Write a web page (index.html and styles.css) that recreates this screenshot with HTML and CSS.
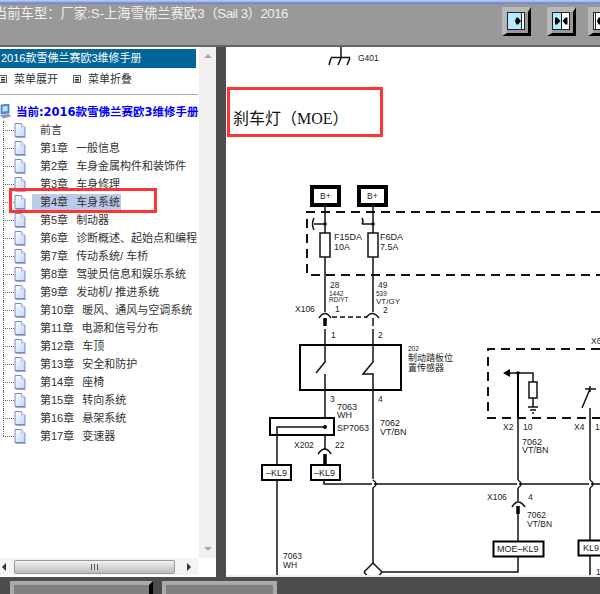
FILE: index.html
```html
<!DOCTYPE html>
<html lang="zh-CN">
<head>
    <meta charset="UTF-8">
    <title>2016款雪佛兰赛欧3维修手册</title>
    <link rel="stylesheet" href="styles.css">
</head>
<body>
    <svg class="defs" width="0" height="0">
        <defs>
            <linearGradient id="docFill" x1="0" y1="0" x2="1" y2="1">
                <stop offset="0" stop-color="#ffffff"/>
                <stop offset="1" stop-color="#bcd6f8"/>
            </linearGradient>
            <symbol id="doc" viewBox="0 0 12 15">
                <path d="M1 .5H7.5L11 4V13.5H1Z" fill="url(#docFill)" stroke="#7d87c0"/>
                <path d="M7.5 .5V4H11" fill="#fff" stroke="#a9b1d8"/>
                <path d="M1.5 14.5H12" stroke="#a8a8b8"/>
            </symbol>
            <symbol id="menuIcon" viewBox="0 0 8 8">
                <path d="M.5 .5H7.5V7.5H.5Z" fill="#fff" stroke="#555"/>
                <path d="M2 2.5H6M2 4.5H6M2 6H6" stroke="#222"/>
            </symbol>
        </defs>
    </svg>

    <div class="titlebar"></div>

    <div class="toolbar">
        <div class="car-info">当前车型：厂家:S-上海雪佛兰赛欧3<span class="car-tail">（Sail 3）2016</span></div>
        <div class="tools">
            <button class="tool-btn">
                <svg width="18" height="18" viewBox="0 0 18 18">
                    <rect x=".5" y=".5" width="17" height="17" fill="#b9e9ff" stroke="#222"/>
                    <rect x="15" y="1" width="2" height="16" fill="#fff"/>
                    <path d="M14.5 1V17" stroke="#222"/>
                    <path d="M8 9L9.5 5.5H11L14 9L11 12.5H9.5Z" fill="#000"/>
                </svg>
            </button>
            <button class="tool-btn btn-mid">
                <svg width="18" height="18" viewBox="0 0 18 18">
                    <rect x=".5" y=".5" width="17" height="17" fill="#fff" stroke="#222"/>
                    <rect x="1" y="1" width="8" height="16" fill="#b9e9ff"/>
                    <path d="M9.5 1V17" stroke="#222"/>
                    <path d="M3 5.5H5L8.5 9L5 12.5H3Z" fill="#000"/>
                    <path d="M15.5 5.5H13.5L10.5 9L13.5 12.5H15.5Z" fill="#000"/>
                </svg>
            </button>
            <button class="tool-btn btn-last">
                <svg width="18" height="18" viewBox="0 0 18 18">
                    <rect x=".5" y=".5" width="17" height="17" fill="#fff" stroke="#222"/>
                    <path d="M2.5 1V17" stroke="#222"/>
                    <path d="M10 9L7 5.5H5.5L4 9L5.5 12.5H7Z" fill="#000"/>
                </svg>
            </button>
        </div>
    </div>

    <div class="main">
        <div class="side">
            <div class="side-top">
                <div class="tree-pane">
                    <div class="manual-title">2016款雪佛兰赛欧3维修手册</div>
                    <div class="menu-row">
                        <span class="menu-link"><svg class="menu-icon"><use href="#menuIcon"/></svg>菜单展开</span>
                        <span class="menu-link"><svg class="menu-icon"><use href="#menuIcon"/></svg>菜单折叠</span>
                    </div>
                    <div class="current">
                        <svg class="root-icon" width="11" height="15" viewBox="0 0 11 15">
                            <path d="M1 1L9 0V9L1 10Z" fill="#4f8fe0" stroke="#3a5f9a" stroke-width=".6"/>
                            <path d="M2.5 2.5L7.5 2V7L2.5 7.5Z" fill="#bfe2ff"/>
                            <path d="M0 11L9 10L11 12.5L3 14.5Z" fill="#8a97ad"/>
                        </svg>
                        <span>当前:2016款雪佛兰赛欧3维修手册</span>
                    </div>
                    <ul class="tree">
                        <li><svg class="doc"><use href="#doc"/></svg><span class="label">前言</span></li>
                        <li><svg class="doc"><use href="#doc"/></svg><span class="label"><b>第1章</b>一般信息</span></li>
                        <li><svg class="doc"><use href="#doc"/></svg><span class="label"><b>第2章</b>车身金属构件和装饰件</span></li>
                        <li><svg class="doc"><use href="#doc"/></svg><span class="label"><b>第3章</b>车身修理</span></li>
                        <li class="active"><svg class="doc"><use href="#doc"/></svg><span class="label"><b>第4章</b>车身系统</span></li>
                        <li><svg class="doc"><use href="#doc"/></svg><span class="label"><b>第5章</b>制动器</span></li>
                        <li><svg class="doc"><use href="#doc"/></svg><span class="label"><b>第6章</b>诊断概述、起始点和编程</span></li>
                        <li><svg class="doc"><use href="#doc"/></svg><span class="label"><b>第7章</b>传动系统/ 车桥</span></li>
                        <li><svg class="doc"><use href="#doc"/></svg><span class="label"><b>第8章</b>驾驶员信息和娱乐系统</span></li>
                        <li><svg class="doc"><use href="#doc"/></svg><span class="label"><b>第9章</b>发动机/ 推进系统</span></li>
                        <li><svg class="doc"><use href="#doc"/></svg><span class="label"><b>第10章</b>暖风、通风与空调系统</span></li>
                        <li><svg class="doc"><use href="#doc"/></svg><span class="label"><b>第11章</b>电源和信号分布</span></li>
                        <li><svg class="doc"><use href="#doc"/></svg><span class="label"><b>第12章</b>车顶</span></li>
                        <li><svg class="doc"><use href="#doc"/></svg><span class="label"><b>第13章</b>安全和防护</span></li>
                        <li><svg class="doc"><use href="#doc"/></svg><span class="label"><b>第14章</b>座椅</span></li>
                        <li><svg class="doc"><use href="#doc"/></svg><span class="label"><b>第15章</b>转向系统</span></li>
                        <li><svg class="doc"><use href="#doc"/></svg><span class="label"><b>第16章</b>悬架系统</span></li>
                        <li><svg class="doc"><use href="#doc"/></svg><span class="label"><b>第17章</b>变速器</span></li>
                    </ul>
                </div>
                <div class="vscroll">
                    <span class="arrow-up"></span>
                    <span class="arrow-down"></span>
                </div>
            </div>
            <div class="hscroll">
                <span class="arrow-left"></span>
                <div class="thumb"><span class="grip"></span></div>
                <span class="arrow-right"></span>
            </div>
            <div class="mark-row"></div>
        </div>

        <div class="splitter"></div>

        <div class="content">
            <svg class="diagram" width="374" height="528" viewBox="226 47 374 528">
                <!-- 标题框 -->
                <rect class="mark" x="228.5" y="88.5" width="153" height="47"/>
                <text class="heading" x="233" y="124">刹车灯（MOE）</text>

                <!-- G401 -->
                <path class="w" d="M341 47V57.5M331 57.5H350M331 58L329 65M341 58L338 65M350 58L347 65"/>
                <text class="t8" x="358" y="61">G401</text>

                <!-- 电源 -->
                <rect class="fat" x="312" y="187" width="27" height="18"/>
                <rect class="fat" x="359" y="187" width="27" height="18"/>
                <text class="t8" x="320" y="199">B+</text>
                <text class="t8" x="367" y="199">B+</text>

                <path class="dash" d="M600 212H307V275H600"/>

                <path class="w" d="M325 205V312M373 205V312"/>
                <circle cx="325" cy="224" r="1.8"/>
                <circle cx="373" cy="224" r="1.8"/>
                <path class="w" d="M325 224H314M314 218Q311 224 314 230M373 224H362M362 218Q364 221 362 224"/>
                <rect class="fuse" x="320" y="233" width="10" height="24"/>
                <rect class="fuse" x="368" y="233" width="10" height="24"/>
                <text class="t9" x="334" y="240">F15DA</text>
                <text class="t9" x="334" y="250">10A</text>
                <text class="t9" x="380" y="240">F6DA</text>
                <text class="t9" x="380" y="250">7.5A</text>
                <text class="t8" x="330" y="288">28</text>
                <text class="t8" x="378" y="288">49</text>
                <text class="t6" x="329" y="296">1442</text>
                <text class="t6" x="329" y="302">RD/YT</text>
                <text class="t6" x="376" y="296">539</text>
                <text class="t7" x="376" y="304">VT/GY</text>
                <text class="t8" x="295" y="312">X106</text>
                <text class="t8" x="335" y="312">1</text>
                <text class="t8" x="383" y="313">2</text>

                <!-- X106 接头 -->
                <path class="w" d="M319 318Q325 309 331 318M366 318Q372 309 379 318"/>
                <path class="pin" d="M325 318V326"/>
                <path class="w" d="M373 318V326M325 329V345M373 329V345"/>
                <path class="thin-dash" d="M332 317H366"/>
                <text class="t8" x="331" y="338">1</text>
                <text class="t8" x="378" y="338">2</text>

                <!-- 开关 -->
                <rect class="box" x="300" y="345" width="101" height="45"/>
                <path class="w" d="M325 345V362L316 373M325 374V450M373 345V362L363 374H373V480"/>
                <text class="t6" x="408" y="351">202</text>
                <text class="cn" x="408" y="361">制动踏板位</text>
                <text class="cn" x="408" y="371">置传感器</text>
                <text class="t8" x="330" y="402">3</text>
                <text class="t8" x="378" y="402">4</text>
                <text class="t9" x="337" y="410">7063</text>
                <text class="t9" x="337" y="418">WH</text>
                <text class="t9" x="380" y="426">7062</text>
                <text class="t9" x="380" y="435">VT/BN</text>

                <!-- SP7063 -->
                <rect class="box" x="270" y="418" width="64" height="17"/>
                <circle cx="325" cy="427" r="2"/>
                <path class="w" d="M325 427H277V575"/>
                <text class="t9" x="337" y="431">SP7063</text>
                <text class="t8" x="294" y="448">X202</text>
                <text class="t8" x="335" y="448">22</text>
                <path class="w" d="M318 454Q325 444 331 454"/>
                <path class="pin" d="M325 454V465"/>

                <rect class="box" x="262" y="465" width="29" height="15"/>
                <rect class="box" x="311" y="465" width="29" height="15"/>
                <text class="t9" x="266" y="476">–KL9</text>
                <text class="t9" x="314" y="476">–KL9</text>

                <!-- 横线 -->
                <path class="w" d="M324 480V484H600"/>
                <path class="white" d="M373 479V489M518 479V489M590 479V489"/>
                <path class="w" d="M373 480Q379 484 373 488V563M518 480Q524 484 518 488M590 480Q596 484 590 488"/>

                <text class="t8" x="283" y="559">7063</text>
                <text class="t8" x="283" y="568">WH</text>
                <path class="w" d="M364 572L373 563L382 572H518V556M364 572L368 577M382 572L378 577"/>

                <!-- 右侧虚线框 -->
                <path class="dash" d="M600 349H488V418H600"/>
                <text class="t8" x="591" y="344">X6</text>
                <path class="w" d="M509 373H533V382M533 398V407"/>
                <path d="M503 373L510 369V377Z"/>
                <circle cx="518" cy="373" r="1.8"/>
                <rect class="fuse" x="529" y="382" width="8" height="16"/>
                <path class="w" d="M528 407H538M530 410H536M532 413H534"/>
                <path class="pin-sm" d="M518 373V418"/>
                <path class="w" d="M518 418V480M518 488V501"/>
                <path class="w" d="M585 389H596M590 386V392M590 389L582 408M590 408V480M590 488V540M590 555V575"/>
                <text class="t8" x="503" y="430">X2</text>
                <text class="t8" x="523" y="430">10</text>
                <text class="t8" x="574" y="430">X4</text>
                <text class="t8" x="595" y="430">14</text>
                <text class="t9" x="522" y="445">7062</text>
                <text class="t9" x="522" y="453">VT/BN</text>

                <!-- 右下 -->
                <text class="t8" x="487" y="500">X106</text>
                <text class="t8" x="528" y="500">4</text>
                <path class="w" d="M512 507Q518 497 525 507"/>
                <path class="pin" d="M518 506V514"/>
                <path class="w" d="M518 514V541"/>
                <text class="t8" x="527" y="518">7062</text>
                <text class="t8" x="527" y="527">VT/BN</text>
                <rect class="box" x="493.5" y="541.5" width="50" height="15"/>
                <text class="t9" x="497" y="552">MOE–KL9</text>
                <rect class="box" x="578.5" y="540.5" width="30" height="15"/>
                <text class="t9" x="583" y="551">KL9</text>
                <text class="t8" x="596" y="575">1</text>
            </svg>
        </div>
    </div>

    <div class="taskbar">
        <div class="task-tab"></div>
        <div class="task-tab tab-wide"></div>
    </div>
</body>
</html>
```

FILE: styles.css
```css
html, body { margin: 0; padding: 0; height: 100%; }
body { width: 600px; height: 594px; overflow: hidden; background: #4d4d4d; font-family: "Liberation Sans", "Noto Sans CJK SC", sans-serif; font-size: 11px; color: #333; }
.defs { position: absolute; }

.titlebar { height: 4px; background: linear-gradient(#c3d0ee, #5d7cc9); }

.toolbar { height: 41px; display: flex; background: #999; border-bottom: 2px solid #666; overflow: hidden; }
.car-info { margin: 1px 0 0 -6px; font-size: 13.3px; line-height: 18px; color: #f0f0f0; white-space: nowrap; }
.car-tail { letter-spacing: -.5px; }
.tools { margin-left: auto; margin-right: -17px; padding-top: 3px; display: flex; align-items: flex-start; flex-shrink: 0; }
.tool-btn { width: 29px; height: 29px; padding: 0; flex-shrink: 0; display: flex; align-items: flex-start; justify-content: flex-start; background: #999; border-style: solid; border-width: 5px 3px 3px 5px; border-color: #b8b8b8 #000 #000 #b8b8b8; box-sizing: border-box; }
.tool-btn svg { display: block; }
.btn-mid { margin-left: 16px; }
.btn-last { margin-left: 12px; }

.main { display: flex; height: 530px; }

.side { width: 216px; position: relative; display: flex; flex-direction: column; background: #fff; }
.side-top { height: 511px; display: flex; }
.tree-pane { width: 198px; overflow: hidden; padding-top: 2px; box-sizing: border-box; }
.vscroll { width: 17px; margin-left: 1px; background: #f0f0f0; display: flex; flex-direction: column; justify-content: space-between; align-items: center; padding: 7px 0; box-sizing: border-box; }
.arrow-up { border: 4px solid transparent; border-top: 0; border-bottom: 4px solid #aaa; }
.arrow-down { border: 4px solid transparent; border-bottom: 0; border-top: 4px solid #aaa; }

.hscroll { height: 17px; width: 198px; display: flex; align-items: center; background: #f4f4f4; }
.arrow-left { margin-left: 2px; border: 4px solid transparent; border-left: 0; border-right: 4px solid #333; }
.arrow-right { margin-left: 12px; border: 4px solid transparent; border-right: 0; border-left: 4px solid #333; }
.thumb { width: 161px; height: 14px; margin-left: 8px; box-sizing: border-box; border: 1px solid #999; border-radius: 2px; background: linear-gradient(#f2f2f2, #bbb); display: flex; align-items: center; justify-content: center; }
.grip { width: 7px; height: 6px; background: repeating-linear-gradient(90deg, #555 0 1px, #ddd 1px 3px); }

.manual-title { width: 196px; height: 19px; line-height: 19px; background: #069; color: #fff; padding-left: 1px; box-sizing: border-box; white-space: nowrap; }
.menu-row { height: 27px; display: flex; padding-top: 3px; box-sizing: border-box; border-bottom: 1px solid #aaa; line-height: 16px; }
.menu-link { display: flex; align-items: center; height: 16px; gap: 7px; }
.menu-link:first-child { margin-left: -1px; width: 74px; }
.menu-icon { width: 8px; height: 8px; }

.current { display: flex; align-items: center; height: 16px; margin-top: 8px; gap: 5px; white-space: nowrap; font-family: "DejaVu Sans", "Noto Sans CJK SC", sans-serif; font-size: 11.5px; font-weight: bold; color: #00f; }
.root-icon { flex-shrink: 0; }

.tree { list-style: none; margin: 2px 0 0; padding: 0; }
.tree li { position: relative; height: 18px; display: flex; align-items: center; padding-left: 14px; white-space: nowrap; }
.tree li::before { content: ""; position: absolute; left: 3px; top: 9px; width: 11px; border-top: 1px dotted #666; }
.tree li::after { content: ""; position: absolute; left: 3px; top: 0; height: 18px; border-left: 1px dotted #666; }
.tree li:last-child::after { height: 9px; }
.doc { width: 12px; height: 15px; flex-shrink: 0; }
.label { margin-left: 6px; padding: 0 1px 0 8px; line-height: 16px; }
.label b { font-weight: normal; margin-right: 8px; }
.active .label { background: #b9cbe6; }

.mark-row { position: absolute; left: 9px; top: 141px; width: 148px; height: 25px; box-sizing: border-box; border: 3px solid #f33; }

.splitter { width: 9px; margin-left: 1px; background: #4d4d4d; }

.content { flex: 1; height: 530px; background: #fff; border-bottom: 2px solid #eee; box-sizing: border-box; }
.diagram { display: block; }
.diagram text { font-family: "Liberation Sans", "Noto Sans CJK SC", sans-serif; fill: #222; }
.diagram .heading { font-family: "Liberation Serif", "Noto Sans CJK SC", serif; font-size: 16px; fill: #111; }
.diagram .t9 { font-size: 9px; }
.diagram .t8 { font-size: 8.5px; }
.diagram .t7 { font-size: 8px; }
.diagram .t6 { font-size: 6.5px; }
.diagram .cn { font-size: 9px; }
.w { fill: none; stroke: #111; stroke-width: 1.5; }
.white { fill: none; stroke: #fff; stroke-width: 2; }
.pin { fill: none; stroke: #000; stroke-width: 3.5; }
.pin-sm { fill: none; stroke: #000; stroke-width: 2; }
.dash { fill: none; stroke: #111; stroke-width: 2; stroke-dasharray: 9 6; }
.thin-dash { fill: none; stroke: #111; stroke-width: 1.5; stroke-dasharray: 5 3; }
.fat { fill: #fff; stroke: #000; stroke-width: 4; }
.box { fill: #fff; stroke: #000; stroke-width: 2; }
.fuse { fill: #fff; stroke: #111; stroke-width: 1.5; }
.mark { fill: none; stroke: #f33; stroke-width: 3; }

.taskbar { height: 17px; display: flex; align-items: flex-end; padding-left: 10px; gap: 9px; }
.task-tab { width: 143px; height: 13px; box-sizing: border-box; border-style: solid; border-width: 4px 4px 0 4px; border-color: #aaa #000 #aaa #aaa; background: #808080; }
.tab-wide { width: 115px; border-right-color: #aaa; }
```
